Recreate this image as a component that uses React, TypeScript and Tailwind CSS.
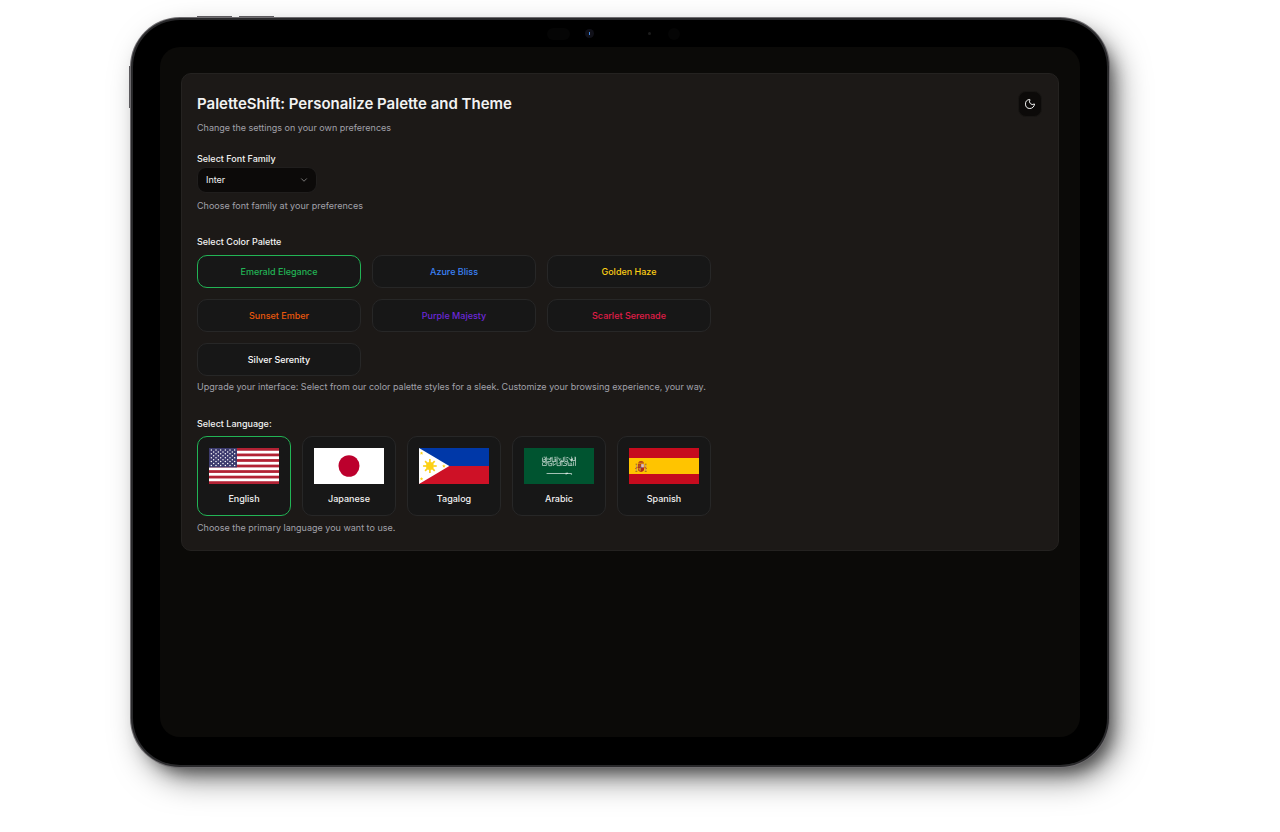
import { useState, type ComponentType } from "react";
import { ChevronDown, Moon } from "lucide-react";

const palettes = [
  { name: "Emerald Elegance", color: "text-[#22b455]" },
  { name: "Azure Bliss", color: "text-[#3b82f6]" },
  { name: "Golden Haze", color: "text-[#facc15]" },
  { name: "Sunset Ember", color: "text-[#ea580c]" },
  { name: "Purple Majesty", color: "text-[#6d28d9]" },
  { name: "Scarlet Serenade", color: "text-[#e11d48]" },
  { name: "Silver Serenity", color: "text-[#fafafa]" },
];

const flagClass = "block h-9 w-full";

function UsFlag() {
  const stars = [];
  for (let row = 0; row < 9; row++) {
    const count = row % 2 === 0 ? 6 : 5;
    for (let i = 0; i < count; i++) {
      stars.push(
        <circle
          key={`${row}-${i}`}
          cx={(row % 2 === 0 ? 2.4 : 4.8) + i * 4.8}
          cy={1.94 * (row + 1)}
          r="0.75"
          fill="#fff"
        />,
      );
    }
  }
  return (
    <svg viewBox="0 0 72 36" preserveAspectRatio="none" className={flagClass} aria-hidden="true">
      <rect width="72" height="36" fill="#fff" />
      {[0, 2, 4, 6, 8, 10, 12].map((n) => (
        <rect key={n} y={(n * 36) / 13} width="72" height={36 / 13} fill="#b22234" />
      ))}
      <rect width="28.8" height="19.4" fill="#3c3b6e" />
      {stars}
    </svg>
  );
}

function JapanFlag() {
  return (
    <svg viewBox="0 0 72 36" preserveAspectRatio="none" className={flagClass} aria-hidden="true">
      <rect width="72" height="36" fill="#fff" />
      <circle cx="36" cy="18" r="10.8" fill="#bc002d" />
    </svg>
  );
}

function PhilippinesFlag() {
  return (
    <svg viewBox="0 0 72 36" preserveAspectRatio="none" className={flagClass} aria-hidden="true">
      <rect width="72" height="18" fill="#0038a8" />
      <rect y="18" width="72" height="18" fill="#ce1126" />
      <path d="M0 0L31.2 18L0 36Z" fill="#fff" />
      <g fill="#fcd116" stroke="#fcd116">
        <circle cx="11.2" cy="18" r="4" stroke="none" />
        {[0, 45, 90, 135, 180, 225, 270, 315].map((a) => (
          <path key={a} d="M11.2 14.5V11" strokeWidth="1.7" transform={`rotate(${a} 11.2 18)`} />
        ))}
        {[
          [2.6, 5.2],
          [2.6, 30.8],
          [25.6, 18],
        ].map(([x, y]) => (
          <path
            key={`${x}-${y}`}
            stroke="none"
            d="M0 -1.8L.5 -.6L1.8 -.5L.8 .4L1.1 1.6L0 .9L-1.1 1.6L-.8 .4L-1.8 -.5L-.5 -.6Z"
            transform={`translate(${x} ${y})`}
          />
        ))}
      </g>
    </svg>
  );
}

function SaudiFlag() {
  return (
    <svg viewBox="0 0 72 36" preserveAspectRatio="none" className={flagClass} aria-hidden="true">
      <rect width="72" height="36" fill="#005430" />
      <g fill="none" stroke="#fff" strokeWidth="0.7" strokeLinecap="round" opacity="0.85">
        <path d="M19 10v3.5h3V10M23 9v5M24.5 13.5h3V9.5M26 11.5l3-2M29 10v3.5h4l-1-3M34 9v5M35.5 10l2 3.5h3V9.5M42 9v4.5h3l-1-2.5M46 10l3 3.5V9M50 10.5l-1.5 2h4V9M53 9.5v8" />
        <path d="M19 15v2.5h4l1-3M20 14.2h2M25.5 14.5v3.2h3v-2.5M30 14v3.5l3-2M34 14.6v3h3.5v-3M39 14v3.7M40.5 17.5h3l1-3M45.5 14.5v3h4l-1-2.5M51 14v3.5" />
        <path d="M20.5 9.2h1M27 15.6h1M31.5 9.3h1M37 11h1M44 9.5h1M47 16h1M20 12l2-1M24 11h2M36 15.5l2-2M41.5 14.8l2 1M48 11.5h2M22 16l2-2M31 12h2M38.5 12.5l2 1" />
      </g>
      <path d="M22.5 25.3h20.2l.5-.8.9.5 1.2-.5v.8h3.5l.8.8-.8.7-1-.7H44l-.8.6-.5-.7H24z" fill="#fff" opacity="0.85" />
    </svg>
  );
}

function SpainFlag() {
  return (
    <svg viewBox="0 0 72 36" preserveAspectRatio="none" className={flagClass} aria-hidden="true">
      <rect width="72" height="36" fill="#c60b1e" />
      <rect y="10" width="72" height="16" fill="#ffc400" />
      <g>
        <path d="M9.4 15.3q.4-2.3 3-2.3t3 2.3z" fill="#a8321c" />
        <path d="M12.4 12.4v1M10.4 14.4h4" stroke="#e0a02a" strokeWidth=".4" />
        <path d="M9.2 15.8h6.4v5q0 2.8-3.2 3.2-3.2-.4-3.2-3.2z" fill="#ad2a1c" />
        <path d="M12.5 16.1h2.8v3.3h-2.8z" fill="#d8c4c0" />
        <path d="M9.6 16.3h2.6v3H9.6z" fill="#b84f1c" />
        <path d="M9.6 20h2.7v3q-2-.2-2.7-2z" fill="#c9822a" />
        <circle cx="12.4" cy="19.5" r=".8" fill="#5f6c9c" />
        <path d="M7.6 16.4v6.6M17.2 16.4v6.6" stroke="#b79a72" strokeWidth="1" />
        <path d="M6.6 23.4h2M16.2 23.4h2M6.8 16.2h1.6M16.4 16.2h1.6" stroke="#8a5b16" strokeWidth=".8" />
        <path d="M6.4 20.6l2.6-1.4M15.8 19.2l2.6 1.4" stroke="#b8421c" strokeWidth=".9" />
      </g>
    </svg>
  );
}

const languages: { name: string; Flag: ComponentType }[] = [
  { name: "English", Flag: UsFlag },
  { name: "Japanese", Flag: JapanFlag },
  { name: "Tagalog", Flag: PhilippinesFlag },
  { name: "Arabic", Flag: SaudiFlag },
  { name: "Spanish", Flag: SpainFlag },
];

const borderFor = (selected: boolean) => (selected ? "border-[#22b455]" : "border-[#272727]");

function SettingsCard() {
  const [font, setFont] = useState("Inter");
  const [palette, setPalette] = useState("Emerald Elegance");
  const [language, setLanguage] = useState("English");

  return (
    <section className="rounded-[10px] border border-[#242220] bg-[#1c1917] pt-[17px] pr-4 pb-[14px] pl-[15px] text-[9px] leading-4 text-[#a1a1aa]">
      <header className="flex items-start justify-between gap-4">
        <div>
          <h1 className="text-[15px] leading-[26px] font-semibold text-[#f2f2f2]">
            PaletteShift: Personalize Palette and Theme
          </h1>
          <p className="mt-[3px]">Change the settings on your own preferences</p>
        </div>
        <button
          type="button"
          aria-label="Toggle theme"
          className="flex h-[26px] w-6 items-center justify-center rounded-lg border border-[#171513] bg-[#0c0a09] text-[#f2f2f2]"
        >
          <Moon className="size-3 shrink-0" strokeWidth={2} />
        </button>
      </header>

      <div className="mt-[15px]">
        <label htmlFor="font-family" className="block font-medium text-[#f2f2f2]">
          Select Font Family
        </label>
        <div className="relative w-[120px]">
          <select
            id="font-family"
            value={font}
            onChange={(e) => setFont(e.target.value)}
            className="block h-[26px] w-full appearance-none rounded-[9px] border border-[#201e1d] bg-[#0c0a09] px-2 text-[#f2f2f2]"
          >
            <option>Inter</option>
            <option>Roboto</option>
            <option>Lato</option>
          </select>
          <ChevronDown className="pointer-events-none absolute top-2 right-2 size-[10px] text-[#8b8a89]" strokeWidth={2} />
        </div>
        <p className="mt-[5px]">Choose font family at your preferences</p>
      </div>

      <div className="mt-5">
        <h2 className="font-medium text-[#f2f2f2]">Select Color Palette</h2>
        <div className="mt-[5px] grid max-w-[514px] grid-cols-3 gap-[11px]">
          {palettes.map(({ name, color }) => (
            <button
              key={name}
              type="button"
              aria-pressed={palette === name}
              onClick={() => setPalette(name)}
              className={`h-[33px] rounded-[10px] border bg-[#171717] font-medium ${color} ${borderFor(palette === name)}`}
            >
              {name}
            </button>
          ))}
        </div>
        <p className="mt-[3px]">
          Upgrade your interface: Select from our color palette styles for a sleek. Customize your browsing experience,
          your way.
        </p>
      </div>

      <div className="mt-[21px]">
        <h2 className="font-medium text-[#f2f2f2]">Select Language:</h2>
        <div className="mt-1 grid max-w-[514px] grid-cols-5 gap-[11px]">
          {languages.map(({ name, Flag }) => (
            <button
              key={name}
              type="button"
              aria-pressed={language === name}
              onClick={() => setLanguage(name)}
              className={`flex h-20 flex-col gap-[7px] rounded-[10px] border bg-[#171717] px-[11px] pt-[11px] font-medium text-[#f2f2f2] ${borderFor(language === name)}`}
            >
              <Flag />
              <span className="w-full text-center">{name}</span>
            </button>
          ))}
        </div>
        <p className="mt-1">Choose the primary language you want to use.</p>
      </div>
    </section>
  );
}

export default function App() {
  return (
    <main className="min-h-screen bg-white pt-[17px] pr-[170px] pb-16 pl-[130px] font-['Inter',sans-serif]">
      <div className="relative rounded-[50px] bg-[#6f6d70] p-px shadow-[10px_14px_32px_-4px_rgba(0,0,0,0.5),8px_10px_16px_-6px_rgba(0,0,0,0.5)]">
        <span className="absolute -top-px left-[67px] h-px w-[35px] bg-[#5c5a5e]" />
        <span className="absolute -top-px left-[109px] h-px w-[35px] bg-[#5c5a5e]" />
        <span className="absolute top-[49px] -left-px h-[42px] w-px bg-[#5c5a5e]" />
        <div className="rounded-[49px] bg-[#29292b] p-[2px]">
          <div className="relative rounded-[47px] bg-black px-[27px] pt-[27px] pb-7">
            <span className="absolute top-2 left-[414px] h-3 w-[23px] rounded-full bg-[#050505]" />
            <span className="absolute top-[9px] left-[452px] flex size-[9px] items-center justify-center rounded-full bg-[#101018]">
              <span className="h-[3px] w-px bg-[#3f86dc]" />
            </span>
            <span className="absolute top-3 left-[515px] size-[3px] rounded-full bg-[#1c1c1c]" />
            <span className="absolute top-2 left-[535px] size-3 rounded-full bg-[#050505]" />
            <div className="min-h-[690px] rounded-[20px] bg-[#0b0a08] px-[21px] pt-[26px] pb-6">
              <SettingsCard />
            </div>
          </div>
        </div>
      </div>
    </main>
  );
}
